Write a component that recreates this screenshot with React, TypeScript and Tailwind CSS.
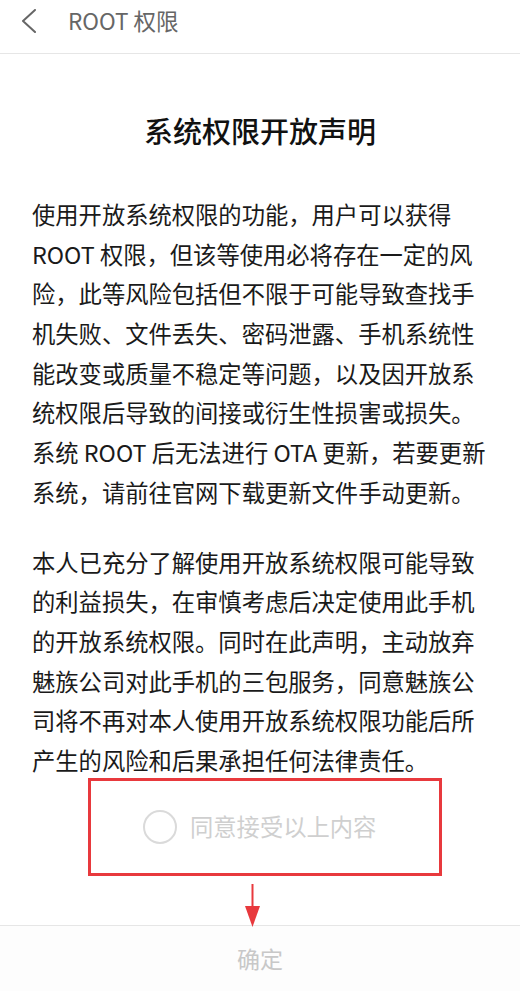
import React from 'react'

const paragraphOne = [
  '使用开放系统权限的功能，用户可以获得',
  'ROOT 权限，但该等使用必将存在一定的风',
  '险，此等风险包括但不限于可能导致查找手',
  '机失败、文件丢失、密码泄露、手机系统性',
  '能改变或质量不稳定等问题，以及因开放系',
  '统权限后导致的间接或衍生性损害或损失。',
  '系统 ROOT 后无法进行 OTA 更新，若要更新',
  '系统，请前往官网下载更新文件手动更新。',
]

const paragraphTwo = [
  '本人已充分了解使用开放系统权限可能导致',
  '的利益损失，在审慎考虑后决定使用此手机',
  '的开放系统权限。同时在此声明，主动放弃',
  '魅族公司对此手机的三包服务，同意魅族公',
  '司将不再对本人使用开放系统权限功能后所',
  '产生的风险和后果承担任何法律责任。',
]

const fontStack = { fontFamily: '"Noto Sans CJK SC", "Noto Sans", sans-serif' }

const Paragraph = ({ lines, className }: { lines: string[]; className?: string }) => (
  <div className={className}>
    {lines.map((line) => (
      <div key={line} className="h-[39.7px] leading-[39.7px] whitespace-nowrap">
        {line}
      </div>
    ))}
  </div>
)

const App = () => {
  return (
    <div className="relative flex h-[991px] w-[520px] flex-col overflow-hidden bg-white" style={fontStack}>
      {/* Top bar */}
      <header className="flex h-[54px] shrink-0 items-center border-b border-[#e6e6e6] pb-[12px]">
        <button className="ml-[19px] flex h-[24px] w-[20px] items-center justify-center">
          <svg width="16" height="24" viewBox="0 0 16 24" fill="none">
            <polyline points="14,1 2,12 14,23" stroke="#666" strokeWidth="2" strokeLinecap="round" strokeLinejoin="round" />
          </svg>
        </button>
        <h1 className="ml-[29px] text-[22.5px] text-[#666]">ROOT 权限</h1>
      </header>

      {/* Statement */}
      <main className="flex flex-col px-[32px]">
        <h2 className="mt-[56px] h-[40px] text-center text-[29px] leading-[40px] font-medium text-[#111]">
          系统权限开放声明
        </h2>
        <Paragraph lines={paragraphOne} className="mt-[45px] text-[23.3px] text-[#1a1a1a]" />
        <Paragraph lines={paragraphTwo} className="mt-[30px] text-[23.3px] text-[#1a1a1a]" />
      </main>

      {/* Agree checkbox, highlighted */}
      <div className="ml-[88px] mt-[-3px] flex h-[98px] w-[354px] items-center border-[3px] border-[#e8393d] pl-[52px]">
        <span className="h-[34px] w-[34px] shrink-0 rounded-full border-2 border-[#dadada]" />
        <span className="ml-[13px] text-[23.3px] text-[#cfcfcf]">同意接受以上内容</span>
      </div>

      {/* Annotation arrow */}
      <svg className="absolute left-[244px] top-[884px]" width="17" height="44" viewBox="0 0 17 44">
        <line x1="8.5" y1="0" x2="8.5" y2="26" stroke="#e8393d" strokeWidth="2" />
        <polygon points="1,22 16,22 8.5,43" fill="#e8393d" />
      </svg>

      {/* Confirm */}
      <footer className="mt-auto flex h-[66px] shrink-0 items-center justify-center border-t border-[#e6e6e6] bg-[#fdfdfd]">
        <span className="text-[23px] text-[#c8c8c8]">确定</span>
      </footer>
    </div>
  )
}

export default App
